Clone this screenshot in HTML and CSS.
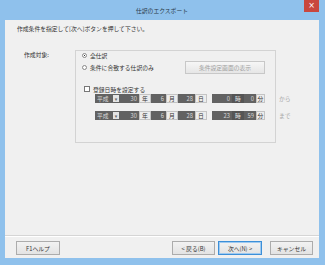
FILE: index.html
```html
<!DOCTYPE html>
<html>

<head>
    <meta charset="UTF-8">
    <title>仕訳のエクスポート</title>
    <link rel="stylesheet" href="styles.css">
</head>

<body>
    <div class="window">
        <div class="titlebar">
            <span>仕訳のエクスポート</span>
            <div class="close-btn">×</div>
        </div>

        <div class="client">
            <p class="intro">作成条件を指定して[次へ]ボタンを押して下さい。</p>

            <div class="main">
                <div class="main-label">作成対象:</div>

                <div class="group">
                    <div class="radio-row">
                        <span class="radio checked"></span>
                        <span>全仕訳</span>
                    </div>
                    <div class="radio-row second">
                        <span class="radio"></span>
                        <span>条件に合致する仕訳のみ</span>
                        <button class="btn cond-btn" disabled>条件設定画面の表示</button>
                    </div>

                    <div class="check-row">
                        <span class="checkbox"></span>
                        <span>登録日時を設定する</span>
                    </div>

                    <!-- from / to rows, disabled state -->
                    <div class="date-row">
                        <span class="val era">平成</span><span class="drop">▾</span>
                        <span class="val w-year">30</span><span class="unit">年</span>
                        <span class="val w-mon">6</span><span class="unit">月</span>
                        <span class="val w-day">28</span><span class="unit">日</span>
                        <span class="val w-hour">0</span><span class="unit dark">時</span>
                        <span class="val w-min">0</span><span class="unit narrow">分</span>
                        <span class="suffix">から</span>
                    </div>
                    <div class="date-row last">
                        <span class="val era">平成</span><span class="drop">▾</span>
                        <span class="val w-year">30</span><span class="unit">年</span>
                        <span class="val w-mon">6</span><span class="unit">月</span>
                        <span class="val w-day">28</span><span class="unit">日</span>
                        <span class="val w-hour">23</span><span class="unit dark">時</span>
                        <span class="val w-min">59</span><span class="unit narrow">分</span>
                        <span class="suffix">まで</span>
                    </div>
                </div>
            </div>

            <div class="footer">
                <button class="btn help-btn">F1ヘルプ</button>
                <div class="footer-right">
                    <button class="btn">&lt; 戻る(B)</button>
                    <button class="btn default">次へ(N) &gt;</button>
                    <button class="btn cancel-btn">キャンセル</button>
                </div>
            </div>
        </div>
    </div>
</body>

</html>
```

FILE: styles.css
```css
body {
    margin: 0;
    font-family: "Noto Sans CJK JP", "Noto Sans", sans-serif;
    font-size: 5.8px;
    color: #333;
}

.window {
    width: 325px;
    height: 265px;
    background-color: #8fc1ec;
    display: flex;
    flex-direction: column;
    box-sizing: border-box;
    padding: 0 6px 7px 5px;
}

.titlebar {
    height: 20px;
    position: relative;
    display: flex;
    align-items: center;
    justify-content: center;
    color: #2b3a48;
}

.close-btn {
    position: absolute;
    top: 0;
    right: 0;
    width: 15px;
    height: 12px;
    background-color: #c9473e;
    color: white;
    font-size: 8px;
    line-height: 12px;
    text-align: center;
    font-family: "DejaVu Sans", sans-serif;
}

.client {
    flex: 1;
    background-color: #f0f0f0;
    display: flex;
    flex-direction: column;
}

.intro {
    margin: 5px 0 0 12px;
    line-height: 7px;
}

.main {
    display: flex;
    margin-top: 19px;
}

.main-label {
    width: 51px;
    padding-left: 19px;
    line-height: 7px;
}

.group {
    width: 201px;
    height: 93px;
    border: 1px solid #d3d3d3;
    padding: 0 0 0 6px;
    box-sizing: border-box;
    margin-top: -1px;
}

.radio-row,
.check-row {
    display: flex;
    align-items: center;
    gap: 3px;
    height: 8px;
}

.radio-row.second {
    height: 13px;
    margin-top: 2px;
}

.radio {
    width: 3px;
    height: 3px;
    border: 1px solid #888;
    border-radius: 50%;
    background: white;
    position: relative;
}

.radio.checked::after {
    content: "";
    position: absolute;
    left: 1px;
    top: 1px;
    width: 1px;
    height: 1px;
    background: #333;
}

.check-row {
    margin: 11px 0 0 2px;
}

.checkbox {
    width: 4px;
    height: 4px;
    border: 1px solid #777;
    background: white;
}

.btn {
    font-family: "Noto Sans CJK JP", "Noto Sans", sans-serif;
    font-size: 5.8px;
    height: 14px;
    width: 43px;
    padding: 0;
    border: 1px solid #acacac;
    background: linear-gradient(#f2f2f2, #e3e3e3);
    color: #333;
}

.cond-btn {
    margin-left: auto;
    margin-right: 10px;
    width: 80px;
    height: 13px;
    color: #a0a0a0;
    border-color: #c8c8c8;
    background: linear-gradient(#f6f6f6, #e6e6e6);
}

.date-row {
    display: flex;
    align-items: stretch;
    height: 9px;
    margin: 1px 0 0 13px;
    line-height: 9px;
    width: 200px;
}

.date-row.last {
    margin-top: 8px;
}

.val {
    background-color: #626262;
    color: #d8d8d8;
    text-align: right;
    padding-right: 2px;
    box-sizing: border-box;
}

.era {
    width: 17px;
    text-align: left;
    padding-left: 2px;
}

.drop {
    width: 8px;
    background-color: #e4e4e4;
    color: #666;
    text-align: center;
    font-size: 5px;
    font-family: "DejaVu Sans", sans-serif;
    border: 1px solid #626262;
    box-sizing: border-box;
}

.w-year { width: 19px; }
.w-mon { width: 15px; }
.w-day { width: 17px; }
.w-hour { width: 20px; margin-left: 5px; }
.w-min { width: 12px; }

.unit {
    width: 12px;
    text-align: center;
    background-color: #ececec;
    border: 1px solid #c4c4c4;
    box-sizing: border-box;
    line-height: 7px;
}

.unit.dark {
    background-color: #555;
    color: #e0e0e0;
    border-color: #555;
}

.unit.narrow {
    width: 9px;
}

.suffix {
    margin-left: 14px;
    color: #a8a8a8;
}

.footer {
    margin-top: auto;
    border-top: 1px solid #d5d5d5;
    box-shadow: inset 0 1px 0 #fff;
    display: flex;
    justify-content: space-between;
    padding: 5px 6px 3px 11px;
}

.help-btn {
    width: 44px;
}

.footer-right {
    display: flex;
    gap: 3px;
}

.btn.default {
    width: 44px;
    border-color: #3c8fd8;
    box-shadow: inset 0 0 0 1px #9fcaf0;
}

.cancel-btn {
    margin-left: 5px;
}
```
